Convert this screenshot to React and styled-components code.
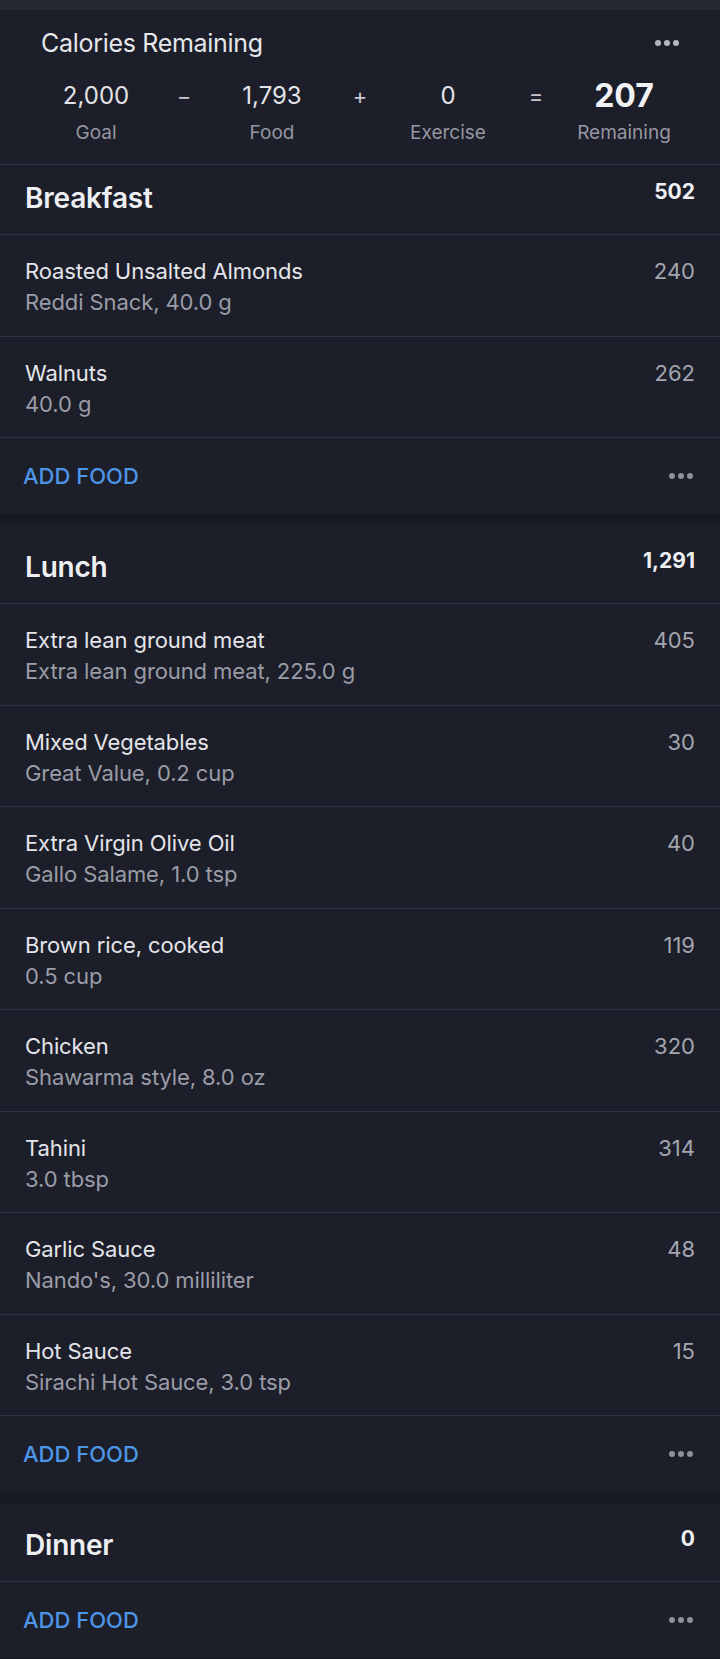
import React from "react";
import styled, { createGlobalStyle } from "styled-components";

const GlobalStyle = createGlobalStyle`
  html, body {
    margin: 0;
    padding: 0;
    background: #171923;
  }
  body {
    font-family: Inter, "Noto Sans", "Liberation Sans", sans-serif;
    -webkit-font-smoothing: antialiased;
  }
  * {
    box-sizing: border-box;
  }
`;

const summary = [
  { value: "2,000", label: "Goal" },
  { op: "−" },
  { value: "1,793", label: "Food" },
  { op: "+" },
  { value: "0", label: "Exercise" },
  { op: "=" },
  { value: "207", label: "Remaining", strong: true },
];

const meals = [
  {
    name: "Breakfast",
    total: "502",
    compact: true,
    items: [
      { name: "Roasted Unsalted Almonds", detail: "Reddi Snack, 40.0 g", cal: 240 },
      { name: "Walnuts", detail: "40.0 g", cal: 262 },
    ],
  },
  {
    name: "Lunch",
    total: "1,291",
    items: [
      { name: "Extra lean ground meat", detail: "Extra lean ground meat, 225.0 g", cal: 405 },
      { name: "Mixed Vegetables", detail: "Great Value, 0.2 cup", cal: 30 },
      { name: "Extra Virgin Olive Oil", detail: "Gallo Salame, 1.0 tsp", cal: 40 },
      { name: "Brown rice, cooked", detail: "0.5 cup", cal: 119 },
      { name: "Chicken", detail: "Shawarma style, 8.0 oz", cal: 320 },
      { name: "Tahini", detail: "3.0 tbsp", cal: 314 },
      { name: "Garlic Sauce", detail: "Nando's, 30.0 milliliter", cal: 48 },
      { name: "Hot Sauce", detail: "Sirachi Hot Sauce, 3.0 tsp", cal: 15 },
    ],
  },
  {
    name: "Dinner",
    total: "0",
    items: [],
  },
];

const Dots = ({ color = "#8e909b", size = 6, gap = 3 }) => (
  <svg width={size * 3 + gap * 2} height={size} viewBox={`0 0 ${size * 3 + gap * 2} ${size}`}>
    {[0, 1, 2].map((i) => (
      <circle key={i} cx={size / 2 + i * (size + gap)} cy={size / 2} r={size / 2} fill={color} />
    ))}
  </svg>
);

const App = () => {
  return (
    <Page>
      <GlobalStyle />
      <TopStrip />
      <Summary>
        <SummaryTitleRow>
          <SummaryTitle>Calories Remaining</SummaryTitle>
          <Dots color="#b4b6bf" size={6} gap={3} />
        </SummaryTitleRow>
        <SummaryGrid>
          {summary.map((s, i) =>
            s.op ? (
              <Operator key={i}>{s.op}</Operator>
            ) : (
              <Stat key={i}>
                <StatValue $strong={s.strong}>{s.value}</StatValue>
                <StatLabel>{s.label}</StatLabel>
              </Stat>
            )
          )}
        </SummaryGrid>
      </Summary>

      {meals.map((meal, idx) => (
        <MealCard key={meal.name} $first={idx === 0}>
          <MealHeader $compact={meal.compact}>
            <MealName>{meal.name}</MealName>
            <MealTotal>{meal.total}</MealTotal>
          </MealHeader>
          {meal.items.map((item) => (
            <FoodRow key={item.name}>
              <FoodText>
                <FoodName>{item.name}</FoodName>
                <FoodDetail>{item.detail}</FoodDetail>
              </FoodText>
              <FoodCal>{item.cal}</FoodCal>
            </FoodRow>
          ))}
          <AddRow>
            <AddFood>ADD FOOD</AddFood>
            <Dots size={6} gap={3} />
          </AddRow>
        </MealCard>
      ))}
      <BottomGap />
    </Page>
  );
};

const Page = styled.div`
  display: flex;
  flex-direction: column;
  width: 720px;
  min-height: 1659px;
  background: #171923;
`;

const TopStrip = styled.div`
  height: 10px;
  background: #262833;
`;

const Summary = styled.div`
  background: #1c1e29;
  padding: 18px 0 19px;
  border-bottom: 1px solid #2f3240;
`;

const SummaryTitleRow = styled.div`
  display: flex;
  align-items: center;
  justify-content: space-between;
  padding: 0 41px 0 41px;
  height: 30px;
`;

const SummaryTitle = styled.div`
  font-size: 25px;
  color: #e6e7eb;
  letter-spacing: -0.3px;
`;

const SummaryGrid = styled.div`
  display: grid;
  grid-template-columns: 120px 56px 120px 56px 120px 56px 120px;
  padding-left: 36px;
  margin-top: 23px;
`;

const Stat = styled.div`
  display: flex;
  flex-direction: column;
  align-items: center;
`;

const StatValue = styled.div`
  height: 30px;
  line-height: 30px;
  font-size: ${(p) => (p.$strong ? "32px" : "24px")};
  font-weight: ${(p) => (p.$strong ? 700 : 400)};
  color: ${(p) => (p.$strong ? "#f2f2f5" : "#e2e3e8")};
`;

const StatLabel = styled.div`
  margin-top: 10px;
  line-height: 24px;
  font-size: 19px;
  color: #9597a2;
`;

const Operator = styled.div`
  text-align: center;
  height: 30px;
  line-height: 30px;
  font-size: 22px;
  color: #c8c9d0;
`;

const MealCard = styled.div`
  background: #1c1e29;
  margin-top: ${(p) => (p.$first ? "0" : "11px")};
`;

const MealHeader = styled.div`
  display: flex;
  justify-content: space-between;
  align-items: flex-start;
  height: ${(p) => (p.$compact ? "70px" : "79px")};
  padding: ${(p) => (p.$compact ? "17px" : "26px")} 25px 0 25px;
  border-bottom: 1px solid #2f3240;
`;

const MealName = styled.div`
  font-size: 28px;
  line-height: 32px;
  font-weight: 600;
  color: #eeeff2;
  letter-spacing: -0.2px;
`;

const MealTotal = styled.div`
  font-size: 21px;
  line-height: 24px;
  font-weight: 700;
  color: #eeeff2;
  margin-top: -2px;
`;

const FoodRow = styled.div`
  display: flex;
  justify-content: space-between;
  align-items: flex-start;
  height: 101.5px;
  padding: 21px 25px 0 25px;
  border-bottom: 1px solid #2f3240;
`;

const FoodText = styled.div`
  display: flex;
  flex-direction: column;
  gap: 1px;
`;

const FoodName = styled.div`
  font-size: 22px;
  line-height: 30px;
  color: #e4e5ea;
  letter-spacing: -0.1px;
`;

const FoodDetail = styled.div`
  font-size: 22px;
  line-height: 30px;
  color: #9a9ca7;
  letter-spacing: -0.1px;
`;

const FoodCal = styled.div`
  font-size: 22px;
  line-height: 30px;
  color: #a3a5af;
`;

const AddRow = styled.div`
  display: flex;
  align-items: center;
  justify-content: space-between;
  height: 76px;
  padding: 0 27px 0 23px;
`;

const AddFood = styled.div`
  font-size: 22px;
  font-weight: 500;
  color: #4d95e6;
`;

const BottomGap = styled.div`
  height: 10px;
`;

export default App;
